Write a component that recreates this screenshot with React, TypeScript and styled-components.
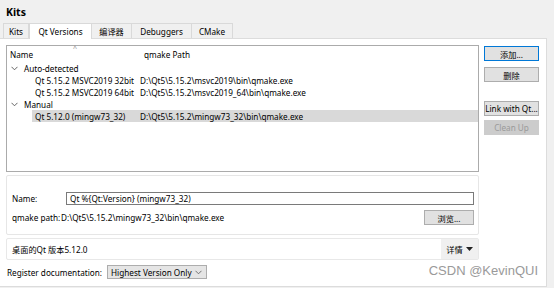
import styled, { createGlobalStyle } from "styled-components";

const GlobalStyle = createGlobalStyle`
  html, body {
    margin: 0;
    padding: 0;
    background: #f0f0f0;
  }
  body {
    font-family: "Noto Sans", "Noto Sans CJK SC", sans-serif;
    font-size: 8.2px;
    color: #000;
  }
`;

const Page = styled.div`
  position: relative;
  width: 554px;
  height: 288px;
  overflow: hidden;
  background: #f0f0f0;
`;

const Title = styled.div`
  height: 23px;
  padding-left: 6px;
  font-size: 10.5px;
  font-weight: bold;
  line-height: 24px;
`;

const TabBar = styled.div`
  display: flex;
  height: 15px;
  padding-left: 3px;
`;

const Tab = styled.div<{ $w: number; $active?: boolean }>`
  width: ${(p) => p.$w}px;
  box-sizing: border-box;
  display: flex;
  align-items: center;
  justify-content: center;
  border: 1px solid #d9d9d9;
  border-bottom: none;
  border-left-width: ${(p) => (p.$active ? 1 : 0)}px;
  background: ${(p) => (p.$active ? "#fff" : "#f0f0f0")};
  margin-bottom: ${(p) => (p.$active ? -1 : 0)}px;
  position: relative;
  z-index: ${(p) => (p.$active ? 1 : 0)};
  &:first-child {
    border-left-width: 1px;
  }
`;

const Panel = styled.div`
  width: 547px;
  height: 249px;
  box-sizing: border-box;
  background: #fff;
  border: 1px solid #dcdcdc;
  border-left: none;
  padding: 6px 0 0 6px;
  display: flex;
  flex-direction: column;
`;

const TopRow = styled.div`
  display: flex;
  gap: 5px;
`;

const Tree = styled.div`
  width: 473px;
  height: 127px;
  box-sizing: border-box;
  border: 1px solid #ababab;
  background: #fff;
`;

const Header = styled.div`
  position: relative;
  display: flex;
  height: 16px;
  align-items: center;
  padding-top: 1px;
  box-sizing: border-box;
`;

const HeaderCell = styled.div<{ $w?: number }>`
  width: ${(p) => (p.$w ? `${p.$w}px` : "auto")};
  flex: ${(p) => (p.$w ? "none" : 1)};
  padding-left: 3px;
  box-sizing: border-box;
`;

const SortMark = styled.div`
  position: absolute;
  left: 66px;
  top: -2px;
  font-size: 7px;
  color: #8a8a8a;
`;

const Row = styled.div<{ $selected?: boolean; $indent: number }>`
  display: flex;
  height: 12px;
  align-items: center;
  margin-left: ${(p) => p.$indent}px;
  background: ${(p) => (p.$selected ? "#d9d9d9" : "transparent")};
  white-space: nowrap;
`;

const Cell = styled.div<{ $w?: number }>`
  width: ${(p) => (p.$w ? `${p.$w}px` : "auto")};
  flex: ${(p) => (p.$w ? "none" : 1)};
  display: flex;
  align-items: center;
  padding-left: 3px;
  box-sizing: border-box;
`;

const Arrow = styled.svg`
  width: 7px;
  height: 5px;
  margin: 0 6px 0 0;
`;

const ButtonCol = styled.div`
  display: flex;
  flex-direction: column;
  padding-top: 1px;
`;

const Button = styled.div<{ $default?: boolean; $disabled?: boolean; $gap?: number }>`
  width: 55px;
  height: 15px;
  box-sizing: border-box;
  display: flex;
  align-items: center;
  justify-content: center;
  margin-top: ${(p) => p.$gap ?? 0}px;
  background: ${(p) => (p.$disabled ? "#cccccc" : "#e1e1e1")};
  border: 1px solid
    ${(p) => (p.$default ? "#0078d7" : p.$disabled ? "#cccccc" : "#adadad")};
  color: ${(p) => (p.$disabled ? "#9a9a9a" : "#000")};
  white-space: nowrap;
`;

const Group = styled.div`
  width: 473px;
  height: 60px;
  margin-top: 3px;
  box-sizing: border-box;
  border: 1px solid #e6e6e6;
  border-radius: 2px;
  padding: 16px 4px 0 5px;
  display: flex;
  flex-direction: column;
  gap: 5px;
`;

const FormRow = styled.div`
  display: flex;
  align-items: center;
  white-space: nowrap;
`;

const Label = styled.div<{ $w: number }>`
  width: ${(p) => p.$w}px;
  flex: none;
`;

const Input = styled.div`
  flex: 1;
  height: 13px;
  box-sizing: border-box;
  border: 1px solid #7a7a7a;
  padding-left: 3px;
  display: flex;
  align-items: center;
`;

const PathValue = styled.div`
  flex: 1;
`;

const SmallButton = styled(Button)`
  width: 50px;
`;

const InfoBar = styled.div`
  width: 473px;
  height: 22px;
  margin-top: 3px;
  box-sizing: border-box;
  border: 1px solid #e8e8e8;
  border-radius: 2px;
  display: flex;
  align-items: stretch;
`;

const InfoText = styled.div`
  flex: 1;
  display: flex;
  align-items: center;
  padding-left: 5px;
`;

const DetailsButton = styled.div`
  width: 37px;
  background: #f0f0f0;
  display: flex;
  align-items: center;
  justify-content: center;
  gap: 3px;
`;

const RegisterRow = styled.div`
  display: flex;
  align-items: center;
  margin-top: 5px;
  margin-left: 1px;
  gap: 5px;
  white-space: nowrap;
`;

const Combo = styled.div`
  width: 100px;
  height: 14px;
  box-sizing: border-box;
  background: #e5e5e5;
  border: 1px solid #adadad;
  display: flex;
  align-items: center;
  justify-content: space-between;
  padding: 0 4px 0 3px;
`;

const Watermark = styled.div`
  position: absolute;
  right: 16px;
  top: 263px;
  font-family: "Liberation Sans", sans-serif;
  font-size: 13px;
  color: #9a9a9a;
  text-shadow: 0 0 2px #fff;
`;

function Chevron() {
  return (
    <Arrow viewBox="0 0 7 5">
      <path d="M0.5 0.8 L3.5 3.8 L6.5 0.8" fill="none" stroke="#555" strokeWidth="0.9" />
    </Arrow>
  );
}

const rows = [
  { kind: "group", name: "Auto-detected" },
  { kind: "item", name: "Qt 5.15.2 MSVC2019 32bit", path: "D:\\Qt5\\5.15.2\\msvc2019\\bin\\qmake.exe" },
  { kind: "item", name: "Qt 5.15.2 MSVC2019 64bit", path: "D:\\Qt5\\5.15.2\\msvc2019_64\\bin\\qmake.exe" },
  { kind: "group", name: "Manual" },
  { kind: "item", name: "Qt 5.12.0 (mingw73_32)", path: "D:\\Qt5\\5.15.2\\mingw73_32\\bin\\qmake.exe", selected: true },
];

export default function App() {
  return (
    <Page>
      <GlobalStyle />
      <Title>Kits</Title>
      <TabBar>
        <Tab $w={26}>Kits</Tab>
        <Tab $w={63} $active>
          Qt Versions
        </Tab>
        <Tab $w={40}>编译器</Tab>
        <Tab $w={60}>Debuggers</Tab>
        <Tab $w={41}>CMake</Tab>
      </TabBar>
      <Panel>
        <TopRow>
          <Tree>
            <Header>
              <HeaderCell $w={134}>Name</HeaderCell>
              <HeaderCell>qmake Path</HeaderCell>
              <SortMark>^</SortMark>
            </Header>
            {rows.map((r) =>
              r.kind === "group" ? (
                <Row key={r.name} $indent={1}>
                  <Cell>
                    <Chevron />
                    {r.name}
                  </Cell>
                </Row>
              ) : (
                <Row key={r.name} $indent={25} $selected={r.selected}>
                  <Cell $w={105}>{r.name}</Cell>
                  <Cell>{r.path}</Cell>
                </Row>
              )
            )}
          </Tree>
          <ButtonCol>
            <Button $default>添加...</Button>
            <Button $gap={6}>删除</Button>
            <Button $gap={19}>Link with Qt...</Button>
            <Button $gap={4} $disabled>
              Clean Up
            </Button>
          </ButtonCol>
        </TopRow>
        <Group>
          <FormRow>
            <Label $w={54}>Name:</Label>
            <Input>Qt %{"{"}Qt:Version{"}"} (mingw73_32)</Input>
          </FormRow>
          <FormRow>
            <Label $w={49}>qmake path:</Label>
            <PathValue>D:\Qt5\5.15.2\mingw73_32\bin\qmake.exe</PathValue>
            <SmallButton>浏览...</SmallButton>
          </FormRow>
        </Group>
        <InfoBar>
          <InfoText>桌面的Qt 版本5.12.0</InfoText>
          <DetailsButton>
            详情
            <svg width="7" height="4" viewBox="0 0 7 4">
              <path d="M0 0 H7 L3.5 4 Z" fill="#222" />
            </svg>
          </DetailsButton>
        </InfoBar>
        <RegisterRow>
          Register documentation:
          <Combo>
            Highest Version Only
            <svg width="7" height="5" viewBox="0 0 7 5">
              <path d="M0.5 0.8 L3.5 3.8 L6.5 0.8" fill="none" stroke="#666" strokeWidth="0.9" />
            </svg>
          </Combo>
        </RegisterRow>
      </Panel>
      <Watermark>CSDN @KevinQUI</Watermark>
    </Page>
  );
}
